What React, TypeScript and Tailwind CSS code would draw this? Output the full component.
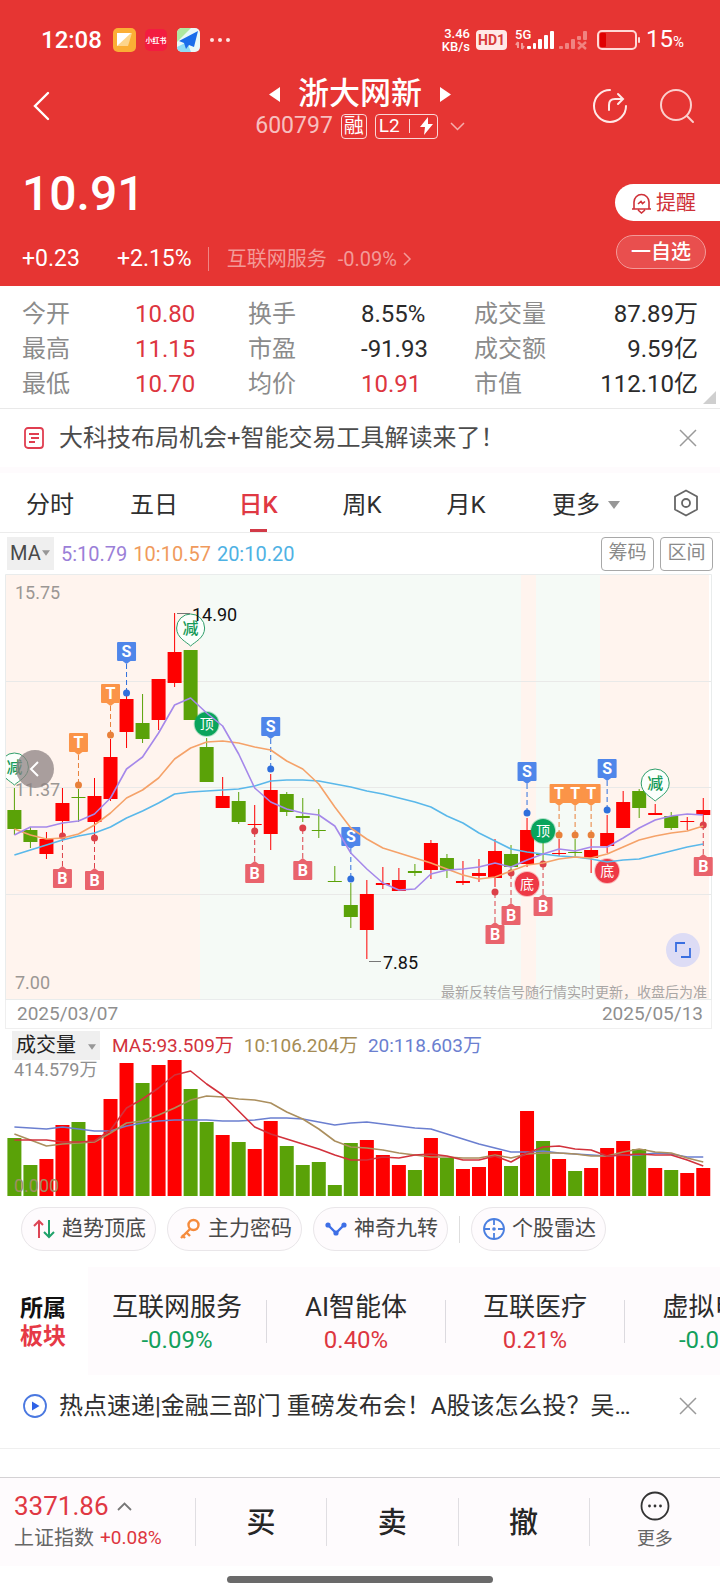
import React from "react";

type Tone = "up" | "down";

const RED = "#fe0000";
const GREEN = "#5aa208";

const STEP = 16.02;
const FIRST = 14.4;
const xAt = (i: number) => FIRST + i * STEP;

// high, body top, body bottom, low
type Candle = [Tone, number, number, number, number];

const candles: Candle[] = [
  ["down", 214, 236, 255, 261],
  ["down", 253, 256, 268, 274],
  ["up", 258, 265, 280, 285],
  ["up", 214, 229, 247, 262],
  ["down", 215, 223, 224, 248],
  ["up", 204, 222, 248, 263],
  ["up", 165, 183, 225, 227],
  ["up", 121, 125, 158, 174],
  ["down", 120, 149, 165, 169],
  ["up", 105, 105, 146, 156],
  ["up", 39, 78, 109, 113],
  ["down", 76, 76, 146, 146],
  ["down", 164, 173, 208, 208],
  ["up", 203, 222, 234, 234],
  ["down", 218, 227, 248, 250],
  ["up", 231, 250, 251, 254],
  ["up", 200, 216, 260, 276],
  ["down", 218, 220, 238, 242],
  ["down", 224, 242, 244, 248],
  ["down", 235, 256, 257, 264],
  ["down", 292, 307, 308, 308],
  ["down", 309, 331, 343, 354],
  ["up", 306, 320, 356, 385],
  ["up", 293, 309, 311, 315],
  ["up", 294, 306, 317, 317],
  ["down", 290, 297, 299, 302],
  ["up", 266, 269, 296, 305],
  ["down", 280, 284, 296, 304],
  ["up", 287, 307, 309, 311],
  ["up", 285, 299, 302, 308],
  ["up", 265, 277, 304, 313],
  ["down", 271, 280, 293, 299],
  ["up", 244, 256, 290, 293],
  ["down", 269, 280, 281, 288],
  ["up", 265, 279, 280, 282],
  ["down", 265, 278, 279, 283],
  ["up", 265, 276, 284, 299],
  ["up", 241, 259, 272, 279],
  ["up", 217, 228, 254, 254],
  ["down", 215, 217, 234, 244],
  ["up", 230, 239, 241, 241],
  ["down", 238, 242, 254, 256],
  ["up", 243, 247, 248, 256],
  ["up", 224, 236, 241, 251],
];

const priceMa5 = [261, 253, 253, 249, 247, 240, 224, 195, 183, 159, 131, 124, 139, 152, 180, 214, 228, 235, 239, 241, 252, 279, 295, 309, 316, 315, 300, 296, 295, 293, 289, 293, 286, 280, 275, 277, 273, 273, 264, 254, 246, 242, 240, 241];
const priceMa10 = [255, 261, 265, 264, 260, 251, 239, 224, 216, 204, 185, 174, 168, 167, 169, 173, 176, 187, 195, 210, 233, 254, 265, 274, 279, 284, 289, 295, 301, 305, 303, 297, 291, 289, 285, 283, 284, 280, 273, 266, 262, 259, 257, 252];
const priceMa20 = [281, 276, 271, 266, 262, 259, 253, 244, 237, 229, 220, 218, 217, 216, 215, 212, 207, 206, 206, 207, 210, 213, 217, 220, 224, 228, 233, 242, 249, 259, 267, 275, 278, 280, 282, 283, 285, 288, 286, 285, 281, 277, 273, 270];

const volumeTops = [78, 105, 99, 65, 62, 75, 39, 3, 23, 5, 0, 29, 62, 75, 82, 89, 61, 86, 105, 102, 125, 83, 80, 95, 105, 110, 78, 98, 109, 107, 91, 106, 51, 81, 99, 111, 108, 88, 81, 89, 108, 110, 113, 108];
const volumeMa5 = [80, 80, 80, 82, 82, 81, 70, 48, 39, 28, 15, 11, 24, 35, 51, 67, 74, 79, 84, 89, 95, 100, 100, 97, 98, 95, 94, 96, 100, 100, 96, 102, 93, 87, 86, 89, 90, 96, 95, 94, 95, 95, 100, 106];
const volumeMa10 = [74, 80, 86, 84, 83, 82, 73, 63, 61, 55, 48, 40, 36, 37, 39, 40, 43, 52, 59, 69, 81, 87, 88, 90, 93, 95, 97, 97, 98, 98, 95, 98, 94, 93, 93, 94, 96, 96, 92, 89, 92, 93, 98, 102];
const volumeMa20 = [67, 68, 69, 67, 69, 71, 71, 66, 63, 61, 60, 60, 60, 61, 61, 60, 58, 58, 59, 62, 65, 63, 62, 64, 66, 68, 69, 74, 79, 84, 88, 92, 92, 91, 93, 94, 95, 96, 95, 95, 93, 94, 97, 97];

const toPoints = (ys: number[]) => ys.map((y, i) => `${xAt(i)},${y}`).join(" ");

type Flag = { kind: "S" | "T" | "B"; at: number; box: number; dot: number };

const flags: Flag[] = [
  { kind: "T", at: 4, box: 159, dot: 211 },
  { kind: "T", at: 6, box: 110, dot: 161 },
  { kind: "S", at: 7, box: 68, dot: 119 },
  { kind: "S", at: 16, box: 143, dot: 195 },
  { kind: "S", at: 21, box: 253, dot: 305 },
  { kind: "S", at: 32, box: 188, dot: 239 },
  { kind: "T", at: 34, box: 210, dot: 261 },
  { kind: "T", at: 35, box: 210, dot: 261 },
  { kind: "T", at: 36, box: 210, dot: 261 },
  { kind: "S", at: 37, box: 185, dot: 236 },
  { kind: "B", at: 3, box: 295, dot: 262 },
  { kind: "B", at: 5, box: 297, dot: 264 },
  { kind: "B", at: 15, box: 290, dot: 257 },
  { kind: "B", at: 18, box: 287, dot: 254 },
  { kind: "B", at: 30, box: 351, dot: 318 },
  { kind: "B", at: 31, box: 332, dot: 299 },
  { kind: "B", at: 33, box: 323, dot: 290 },
  { kind: "B", at: 43, box: 283, dot: 251 },
];

const flagColors = {
  S: { box: "#4f86ea", dot: "#2f6fdc" },
  T: { box: "#fb9448", dot: "#e8803a" },
  B: { box: "#e9636c", dot: "#dc4048" },
};

function FlagMark({ kind, at, box, dot }: Flag) {
  const x = xAt(at);
  const c = flagColors[kind];
  const below = kind === "B";
  const edge = below ? box : box + 19;
  const tip = below ? box - 3 : box + 22;
  return (
    <g>
      <line x1={x} x2={x} y1={tip} y2={dot} stroke={c.dot} strokeWidth="1" strokeDasharray="5 3" />
      <circle cx={x} cy={dot} r="3.5" fill={c.dot} />
      <rect x={x - 9.5} y={box} width="19" height="19" rx="1" fill={c.box} />
      <path d={`M${x - 4} ${edge}H${x + 4}L${x} ${tip}Z`} fill={c.box} />
      <text x={x} y={box + 15} textAnchor="middle" fontSize="16" fontWeight="700" fill="#fff">
        {kind}
      </text>
    </g>
  );
}

function Balloon({ at, cy }: { at: number; cy: number }) {
  const x = xAt(at);
  return (
    <g>
      <path
        d={`M${x} ${cy + 18}C${x - 4} ${cy + 14} ${x - 14} ${cy + 10} ${x - 14} ${cy}A14 14 0 0 1 ${x + 14} ${cy}C${x + 14} ${cy + 10} ${x + 4} ${cy + 14} ${x} ${cy + 18}Z`}
        fill="#fbfffc"
        stroke="#2f9e6a"
        strokeWidth="1"
      />
      <text x={x} y={cy + 6} textAnchor="middle" fontSize="16" fontWeight="500" fill="#159a58">
        减
      </text>
    </g>
  );
}

function RoundMark({ at, cy, label, color }: { at: number; cy: number; label: string; color: string }) {
  const x = xAt(at);
  return (
    <g>
      <circle cx={x} cy={cy} r="12" fill={color} stroke={color} strokeOpacity="0.3" strokeWidth="2" />
      <text x={x} y={cy + 5} textAnchor="middle" fontSize="14" fill="#fff">
        {label}
      </text>
    </g>
  );
}

function PriceChart() {
  return (
    <div className="relative">
      <svg viewBox="0 0 720 426" className="block w-full" role="img" aria-label="日K线图">
        <clipPath id="plot">
          <rect x="6" y="0" width="706" height="426" />
        </clipPath>
        <rect x="6" y="0" width="703" height="426" fill="#fff4ee" />
        <rect x="200" y="0" width="321" height="426" fill="#f5faf6" />
        <rect x="536" y="0" width="64" height="426" fill="#f5faf6" />
        {[107, 213, 320].map((y) => (
          <line key={y} x1="6" x2="712" y1={y + 0.5} y2={y + 0.5} stroke="#e9e9e8" />
        ))}
        <path d="M5.5 426V0.5H711.5V426M6 425.5H712" fill="none" stroke="#e9ecec" />

        <g fontSize="18" fill="#9b9794">
          <text x="15" y="25">15.75</text>
          <text x="15" y="222">11.37</text>
          <text x="15" y="415">7.00</text>
        </g>

        {candles.map(([tone, high, top, bottom, low], i) => {
          const fill = tone === "up" ? RED : GREEN;
          return (
            <g key={i} fill={fill}>
              <rect x={xAt(i) - 0.5} y={high} width="1" height={Math.max(low - high, 1)} />
              <rect x={xAt(i) - 7} y={top} width="14" height={Math.max(bottom - top, 1)} />
            </g>
          );
        })}

        <g clipPath="url(#plot)">
          <Balloon at={0} cy={193} />
          <Balloon at={11} cy={54} />
          <Balloon at={40} cy={209} />
        </g>
        <RoundMark at={12} cy={150} label="顶" color="#0aa45c" />
        <RoundMark at={33} cy={257} label="顶" color="#0aa45c" />
        <RoundMark at={32} cy={310} label="底" color="#ee3946" />
        <RoundMark at={37} cy={297} label="底" color="#ee3946" />
        {flags.map((f) => (
          <FlagMark key={f.kind + f.at} {...f} />
        ))}

        <g fill="none" strokeWidth="1.6" strokeLinejoin="round">
          <polyline points={toPoints(priceMa20)} stroke="#5ab8ea" />
          <polyline points={toPoints(priceMa10)} stroke="#f5a269" />
          <polyline points={toPoints(priceMa5)} stroke="#a588ea" />
        </g>

        <path d="M177 39.5H190M369 387.5H381" stroke="#777" strokeWidth="1" />
        <g fontSize="18" fill="#111">
          <text x="192" y="47">14.90</text>
          <text x="383" y="395">7.85</text>
        </g>
        <text x="707" y="423" textAnchor="end" fontSize="14" fill="#a9a6a5">
          最新反转信号随行情实时更新，收盘后为准
        </text>
      </svg>
      <button
        aria-label="上一段"
        className="absolute left-4 top-[176px] flex size-[38px] items-center justify-center rounded-full bg-[#8c8282]/75"
      >
        <svg width="38" height="38" viewBox="0 0 38 38" fill="none">
          <path d="M22 12L15 19L22 26" stroke="#fff" strokeWidth="2" />
        </svg>
      </button>
      <button
        aria-label="全屏"
        className="absolute right-5 top-[359px] flex size-[34px] items-center justify-center rounded-full bg-[#dddcf5]"
      >
        <svg width="34" height="34" viewBox="0 0 34 34" fill="none" stroke="#3a6fe0" strokeWidth="1.8">
          <path d="M10 19V10H19M15 24H24V15" />
        </svg>
      </button>
    </div>
  );
}

function VolumeChart() {
  return (
    <svg viewBox="0 0 720 136" className="block w-full" role="img" aria-label="成交量图">
      <text x="14" y="16" fontSize="18" fill="#8f8f8f">414.579万</text>
      {volumeTops.map((top, i) => (
        <rect
          key={i}
          x={xAt(i) - 7}
          y={top}
          width="14"
          height={136 - top}
          fill={candles[i][0] === "up" ? RED : GREEN}
        />
      ))}
      <text x="14" y="132" fontSize="18" fill="#a08f66">0.000</text>
      <g fill="none" strokeWidth="1.6" strokeLinejoin="round">
        <polyline points={toPoints(volumeMa20)} stroke="#6b7fd0" />
        <polyline points={toPoints(volumeMa10)} stroke="#ab8f5e" />
        <polyline points={toPoints(volumeMa5)} stroke="#d2323c" />
      </g>
    </svg>
  );
}

function StatusBar() {
  return (
    <div className="flex h-[72px] items-center pl-[41px] pr-9 pt-2">
      <span className="text-[24px] leading-6 font-medium">12:08</span>
      <svg className="ml-[11px]" width="120" height="24" viewBox="0 0 120 24" aria-hidden="true">
        <rect width="23" height="24" rx="5" fill="#fbae35" />
        <path d="M4 5H19L15 18H4Z" fill="#fdd58c" />
        <path d="M4 5H18L4 18Z" fill="#fff" />
        <rect x="32" y="1" width="22" height="22" rx="5" fill="#f31c40" />
        <text x="43" y="15" textAnchor="middle" fontSize="7" fontWeight="700" fill="#fff">小红书</text>
        <rect x="64" width="23" height="24" rx="5" fill="#e9f8f8" />
        <path d="M64 5a5 5 0 0 1 5-5H78L64 14Z" fill="#aee8a0" />
        <path d="M64 19L74 14L78 24H69a5 5 0 0 1-5-5Z" fill="#8fdcf5" />
        <path d="M85 3L66 13L71 15L73 21L76 17L81 19Z" fill="#1a6dea" />
        <g fill="#ffe3e0">
          <circle cx="99" cy="12" r="2" />
          <circle cx="107" cy="12" r="2" />
          <circle cx="115" cy="12" r="2" />
        </g>
      </svg>
      <div className="ml-auto text-right text-[13px] leading-[13px] font-medium">
        <div>3.46</div>
        <div>KB/s</div>
      </div>
      <span className="ml-[6px] rounded bg-[#ffe9e7] px-[2px] text-[14px] leading-5 font-bold text-[#d83a38]">
        HD1
      </span>
      <svg className="ml-2" width="72" height="22" viewBox="0 0 72 22" aria-hidden="true">
        <text x="0" y="10" fontSize="13" fontWeight="500" fill="#fff">5G</text>
        <path d="M3 13V19M7 14V20M1 16L3 13M9 17L7 20" stroke="#f29a97" strokeWidth="2" />
        <g fill="#fff">
          <rect x="12" y="17" width="4" height="3" rx="1" />
          <rect x="18" y="14" width="3" height="6" rx="1" />
          <rect x="23" y="10" width="4" height="10" rx="1" />
          <rect x="29" y="6" width="4" height="14" rx="1" />
          <rect x="35" y="2" width="4" height="18" rx="1" />
        </g>
        <g fill="#f08380">
          <rect x="44" y="17" width="4" height="3" rx="1" />
          <rect x="50" y="14" width="4" height="6" rx="1" />
          <rect x="56" y="10" width="4" height="10" rx="1" />
          <rect x="62" y="7" width="4" height="4" rx="1" />
          <rect x="68" y="2" width="4" height="9" rx="1" />
        </g>
        <path d="M63 13L71 20M71 13L63 20" stroke="#f08380" strokeWidth="2.4" />
      </svg>
      <svg className="ml-[10px]" width="44" height="20" viewBox="0 0 44 20" aria-hidden="true">
        <rect x="1" y="1" width="38" height="18" rx="4" fill="none" stroke="#ffd9d6" strokeWidth="2" />
        <rect x="3" y="3" width="6" height="14" rx="1" fill="#e00000" />
        <rect x="41" y="7" width="2" height="6" rx="1" fill="#ffd9d6" />
      </svg>
      <span className="ml-[5px] text-[24px] leading-6">
        15<span className="text-[15px]">%</span>
      </span>
    </div>
  );
}

function Header() {
  return (
    <header className="h-[286px] bg-[#e63533] text-white">
      <StatusBar />
      <div className="grid h-[66px] grid-cols-[140px_1fr_140px] items-center">
        <button aria-label="返回" className="ml-[33px] w-fit">
          <svg width="18" height="30" viewBox="0 0 18 30" fill="none">
            <path d="M15 2L2 15L15 28" stroke="#fff" strokeWidth="2.4" strokeLinecap="round" />
          </svg>
        </button>
        <div className="flex flex-col items-center pt-1">
          <div className="flex h-9 items-center gap-[18px]">
            <button aria-label="上一只">
              <svg width="11" height="15" viewBox="0 0 11 15"><path d="M11 0V15L0 7.5Z" fill="#fff" /></svg>
            </button>
            <h1 className="text-[31px] leading-9 font-medium">浙大网新</h1>
            <button aria-label="下一只">
              <svg width="11" height="15" viewBox="0 0 11 15"><path d="M0 0V15L11 7.5Z" fill="#fff" /></svg>
            </button>
          </div>
          <div className="flex h-7 items-center gap-2">
            <span className="text-[23px] leading-7 text-white/70">600797</span>
            <span className="flex h-[25px] items-center rounded border border-white/80 px-[2px] text-[20px]">融</span>
            <span className="flex h-[25px] items-center rounded border border-white/80 px-[3px] text-[19px]">
              L2
              <i className="mx-[9px] h-[14px] w-px bg-white/80" />
              <svg width="15" height="18" viewBox="0 0 15 18"><path d="M9 0L1 10H6L5 18L14 7H9Z" fill="#fff" /></svg>
            </span>
            <svg className="ml-1" width="15" height="9" viewBox="0 0 15 9" fill="none">
              <path d="M1 1L7.5 7.5L14 1" stroke="#f6aeac" strokeWidth="1.5" />
            </svg>
          </div>
        </div>
        <div className="flex justify-end gap-[31px] pr-[25px]">
          <button aria-label="分享">
            <svg width="36" height="36" viewBox="0 0 36 36" fill="none" stroke="#ffe9e7" strokeWidth="2" strokeLinecap="round">
              <path d="M18 2A16 16 0 1 0 34 18" />
              <path d="M17 22V17Q17 11 23 11H30M26 6L31 11L26 16" />
            </svg>
          </button>
          <button aria-label="搜索">
            <svg width="36" height="36" viewBox="0 0 36 36" fill="none" stroke="#fbcfcd" strokeWidth="2" strokeLinecap="round">
              <circle cx="17" cy="17" r="15" />
              <path d="M28 28L34 34" />
            </svg>
          </button>
        </div>
      </div>

      <div className="flex justify-between">
        <div className="pl-[22px] pt-[26px]">
          <div className="text-[48px] leading-[60px] font-medium">10.91</div>
          <div className="mt-[17px] flex h-9 items-center text-[23px] leading-9">
            <span>+0.23</span>
            <span className="ml-[37px]">+2.15%</span>
            <i className="ml-4 h-6 w-px bg-white/40" />
            <a href="#sector" className="ml-[18px] flex items-center text-[20px] text-[#f39a98]">
              互联网服务
              <span className="ml-[11px]">-0.09%</span>
              <svg className="ml-[6px]" width="9" height="14" viewBox="0 0 9 14" fill="none">
                <path d="M1 1L7 7L1 13" stroke="#f39a98" strokeWidth="1.5" />
              </svg>
            </a>
          </div>
        </div>
        <div className="flex flex-col items-end pt-[46px]">
          <button className="flex h-[37px] items-center gap-1 rounded-l-full bg-white pl-4 pr-6 text-[20px] text-[#cf3038]">
            <svg width="21" height="22" viewBox="0 0 21 22" fill="none" stroke="#cf3038" strokeWidth="1.6">
              <path d="M3 17V10a7.5 7.5 0 0 1 15 0V17M1 17H20M7 18L10.5 21L14 18" />
              <path d="M7 12L10 9.5L11.500 11.5L14 9.5" />
            </svg>
            提醒
          </button>
          <button className="mr-[14px] mt-[14px] h-[34px] rounded-full border border-[#f39a98] bg-[#e94f4e] px-[14px] text-[20px] font-medium">
            一自选
          </button>
        </div>
      </div>
    </header>
  );
}

const stats = [
  ["今开", "10.80", "换手", "8.55%", "成交量", "87.89万"],
  ["最高", "11.15", "市盈", "-91.93", "成交额", "9.59亿"],
  ["最低", "10.70", "均价", "10.91", "市值", "112.10亿"],
];

function Stats() {
  return (
    <section className="relative border-b border-[#e9e9e9] px-[22px] pb-[6px] pt-[11px]">
      <table className="w-full table-fixed text-[24px] leading-[35px]">
        <tbody>
          {stats.map((row, r) => (
            <tr key={row[0]} className="h-[35px]">
              <th scope="row" className="w-[113px] p-0 text-left font-normal text-[#8b8b8b]">{row[0]}</th>
              <td className="w-[113px] p-0 text-[#dd3640]">{row[1]}</td>
              <th scope="row" className="w-[113px] p-0 text-left font-normal text-[#8b8b8b]">{row[2]}</th>
              <td className={`w-[113px] p-0 ${r === 2 ? "text-[#dd3640]" : "text-[#2b2b2b]"}`}>{row[3]}</td>
              <th scope="row" className="w-[88px] p-0 text-left font-normal text-[#8b8b8b]">{row[4]}</th>
              <td className="p-0 text-right text-[#2b2b2b]">{row[5]}</td>
            </tr>
          ))}
        </tbody>
      </table>
      <svg className="absolute bottom-1 right-1" width="13" height="13" viewBox="0 0 13 13" aria-hidden="true">
        <path d="M13 0V13H0Z" fill="#cfcfcf" />
      </svg>
    </section>
  );
}

function CloseButton() {
  return (
    <button aria-label="关闭" className="ml-auto shrink-0">
      <svg width="18" height="18" viewBox="0 0 18 18" fill="none">
        <path d="M1 1L17 17M17 1L1 17" stroke="#9a9a9a" strokeWidth="1.5" />
      </svg>
    </button>
  );
}

function Caret({ className }: { className?: string }) {
  return (
    <svg width="12" height="8" viewBox="0 0 12 8" className={className} aria-hidden="true">
      <path d="M0 0H12L6 8Z" fill="#979797" />
    </svg>
  );
}

function Tabs() {
  const tabs = ["分时", "五日", "日K", "周K", "月K"];
  return (
    <nav className="grid h-[60px] grid-cols-[26fr_26fr_26fr_26fr_26fr_33fr_17fr] border-b border-[#ececec] text-[24px] text-[#2f2f2f]">
      {tabs.map((t) => (
        <button key={t} className={`relative pt-1 pr-1 ${t === "日K" ? "font-medium text-[#e03843]" : ""}`}>
          {t}
          {t === "日K" && <i className="absolute bottom-0 left-[42px] h-[3px] w-[17px] bg-[#d23a48]" />}
        </button>
      ))}
      <button className="flex items-center justify-center gap-2 pt-1">
        更多
        <Caret />
      </button>
      <button aria-label="设置" className="flex items-center justify-center">
        <svg width="28" height="28" viewBox="0 0 28 28" fill="none" stroke="#666" strokeWidth="1.8" strokeLinejoin="round">
          <path d="M14 1.5L25 7.5V20.5L14 26.5L3 20.5V7.5Z" />
          <circle cx="14" cy="14" r="4" />
        </svg>
      </button>
    </nav>
  );
}

function Signals() {
  const pill = "flex h-11 items-center gap-[7px] rounded-full border border-[#e9e6e9] bg-[#fefbfd] pl-[11px] pr-[9px] whitespace-nowrap";
  return (
    <div className="flex items-center gap-[11px] pl-[21px] pt-[11px] text-[21px] text-[#4a4a4a]">
      <button className={pill}>
        <svg width="22" height="22" viewBox="0 0 22 22" fill="none" strokeWidth="2">
          <path d="M6 20V3M1 8L6 3L10 7" stroke="#dd4555" />
          <path d="M16 2V19M11 14L16 19L21 14" stroke="#1fa26a" />
        </svg>
        趋势顶底
      </button>
      <button className={pill}>
        <svg width="22" height="22" viewBox="0 0 22 22" fill="none" stroke="#f58b3c" strokeWidth="2.4">
          <circle cx="14.5" cy="7" r="5" />
          <path d="M11 11L2 20M7 14L11 18M3 17L6 20" />
        </svg>
        主力密码
      </button>
      <button className={pill}>
        <svg width="22" height="22" viewBox="0 0 22 22" fill="none" stroke="#3e6fe6" strokeWidth="2.4">
          <path d="M3 7L11 15L19 7" />
          <g fill="#3e6fe6" stroke="none">
            <circle cx="3" cy="7" r="2.6" />
            <circle cx="11" cy="15" r="2.6" />
            <circle cx="19" cy="7" r="2.6" />
          </g>
        </svg>
        神奇九转
      </button>
      <i className="h-[27px] w-px bg-[#dedede]" />
      <button className={pill}>
        <svg width="22" height="22" viewBox="0 0 22 22" fill="none" stroke="#4a7fe0" strokeWidth="1.8">
          <circle cx="11" cy="11" r="10" />
          <path d="M11 1V7M11 15V21M1 11H7M15 11H21" />
          <circle cx="11" cy="11" r="1.8" fill="#4a7fe0" stroke="none" />
        </svg>
        个股雷达
      </button>
    </div>
  );
}

const sectors = [
  { name: "互联网服务", change: "-0.09%" },
  { name: "AI智能体", change: "0.40%" },
  { name: "互联医疗", change: "0.21%" },
  { name: "虚拟电厂", change: "-0.05%" },
];

function Sectors() {
  return (
    <section id="sector" className="mt-4 flex h-[108px] overflow-hidden">
      <h2 className="w-[88px] shrink-0 pl-5 pt-7 text-[23px] leading-7 font-bold text-[#111]">
        所属
        <span className="block text-[#e63946]">板块</span>
      </h2>
      <div className="flex min-w-0 flex-1 overflow-hidden bg-[#fefbfd]">
        {sectors.map((s, i) => (
          <a key={s.name} href="#sector" className="flex w-[179px] shrink-0 items-center whitespace-nowrap">
            <span className="flex-1 pt-1 text-center">
              <span className="block text-[26px] leading-[34px] text-[#2b2b2b]">{s.name}</span>
              <span
                className={`block text-[24px] leading-8 ${s.change.startsWith("-") ? "text-[#12a05c]" : "text-[#dd3640]"}`}
              >
                {s.change}
              </span>
            </span>
            {i < 3 && <i className="h-[43px] w-px bg-[#dcdadf]" />}
          </a>
        ))}
      </div>
    </section>
  );
}

function BottomBar() {
  return (
    <footer className="border-t border-[#d4d2d4] bg-[#fefbfd]">
      <div className="flex h-[88px] items-center text-[29px] font-medium text-[#262626]">
        <button className="w-[195px] pl-[14px] text-left font-normal whitespace-nowrap">
          <span className="flex items-center gap-2 text-[26px] leading-8 text-[#e03843]">
            3371.86
            <svg width="15" height="9" viewBox="0 0 15 9" fill="none">
              <path d="M1 8L7.5 1.5L14 8" stroke="#777" strokeWidth="1.8" />
            </svg>
          </span>
          <span className="flex items-center gap-[6px] text-[20px] leading-8 text-[#666]">
            上证指数
            <span className="text-[19px] text-[#dd3640]">+0.08%</span>
          </span>
        </button>
        {["买", "卖", "撤"].map((t) => (
          <button key={t} className="h-12 flex-1 border-l border-[#e0dee2] pt-1">{t}</button>
        ))}
        <button className="flex h-12 flex-1 flex-col items-center justify-center border-l border-[#e0dee2]">
          <svg className="shrink-0" width="30" height="30" viewBox="0 0 30 30" fill="none" stroke="#333" strokeWidth="1.8">
            <circle cx="15" cy="15" r="13.5" />
            <g fill="#333" stroke="none">
              <circle cx="9.5" cy="15" r="1.4" />
              <circle cx="15" cy="15" r="1.4" />
              <circle cx="20.5" cy="15" r="1.4" />
            </g>
          </svg>
          <span className="mt-1 shrink-0 text-[18px] leading-7 font-normal text-[#666]">更多</span>
        </button>
      </div>
      <div className="flex h-[27px] justify-center bg-white pt-[10px]">
        <div className="h-[7px] w-[37%] rounded-full bg-[#6a6a6a]" />
      </div>
    </footer>
  );
}

export default function App() {
  return (
    <div className="w-full overflow-hidden bg-white font-[Roboto,'Noto_Sans_CJK_SC',sans-serif] text-[#2b2b2b]">
      <Header />
      <Stats />

      <div className="flex h-[58px] items-center pl-6 pr-[23px] text-[24px] text-[#4c4c4c]">
        <svg width="21" height="22" viewBox="0 0 21 22" fill="none" stroke="#e03e50" strokeWidth="1.8">
          <rect x="1" y="1" width="18" height="20" rx="3" />
          <path d="M5 7H15M7 11H15M5 15H11" />
        </svg>
        <p className="ml-[14px]">大科技布局机会+智能交易工具解读来了！</p>
        <CloseButton />
      </div>
      <div className="h-[6px] bg-[#fefbfd]" />

      <Tabs />

      <div className="flex h-[41px] items-center gap-[6px] pl-[7px] pr-[7px] text-[20px]">
        <label className="relative mr-px block">
          <select
            aria-label="主图指标"
            className="block h-[33px] w-[47px] appearance-none bg-[#efefef] pl-[3px] text-[20px] leading-[33px] text-[#4a4a4a]"
          >
            <option>MA</option>
          </select>
          <Caret className="pointer-events-none absolute right-1 top-3 w-2" />
        </label>
        <span className="text-[#9b7fd8]">5:10.79</span>
        <span className="text-[#f09a5c]">10:10.57</span>
        <span className="text-[#4fb2e4]">20:10.20</span>
        <button className="ml-auto h-[34px] w-[53px] rounded border border-[#a8a8a8] text-[19px] text-[#8a8a8a]">筹码</button>
        <button className="h-[34px] w-[53px] rounded border border-[#a8a8a8] text-[19px] text-[#8a8a8a]">区间</button>
      </div>

      <PriceChart />
      <div className="ml-[5px] mr-2 flex h-[29px] items-center justify-between border-x border-b border-[#efefef] pl-[11px] pr-2 text-[19px] text-[#8f8f8f]">
        <time>2025/03/07</time>
        <time>2025/05/13</time>
      </div>

      <div className="flex h-[31px] items-center gap-[10px] pl-3 pt-[2px] text-[19px] leading-[29px] whitespace-nowrap">
        <label className="relative mr-[2px] block">
          <select
            aria-label="副图指标"
            className="block h-[29px] w-[88px] appearance-none bg-[#efefef] pl-1 text-[20px] leading-[29px] text-[#222]"
          >
            <option>成交量</option>
          </select>
          <Caret className="pointer-events-none absolute right-1 top-3 w-2" />
        </label>
        <span className="text-[#d2323c]">MA5:93.509万</span>
        <span className="text-[#a58c55]">10:106.204万</span>
        <span className="text-[#6b7fd0]">20:118.603万</span>
      </div>
      <VolumeChart />

      <Signals />
      <Sectors />

      <div className="flex h-[74px] items-center border-b border-[#efefef] pb-3 pl-[23px] pr-[23px] text-[24px] text-[#2f2f2f]">
        <svg className="shrink-0" width="24" height="24" viewBox="0 0 24 24" fill="none" stroke="#4a78e0" strokeWidth="1.8">
          <circle cx="12" cy="12" r="11" />
          <path d="M9 7.5L16.5 12L9 16.5Z" fill="#2f62e6" stroke="none" />
        </svg>
        <p className="ml-3 mr-12 truncate">热点速递|金融三部门 重磅发布会！A股该怎么投？吴...</p>
        <CloseButton />
      </div>
      <div className="h-7" />

      <BottomBar />
    </div>
  );
}
